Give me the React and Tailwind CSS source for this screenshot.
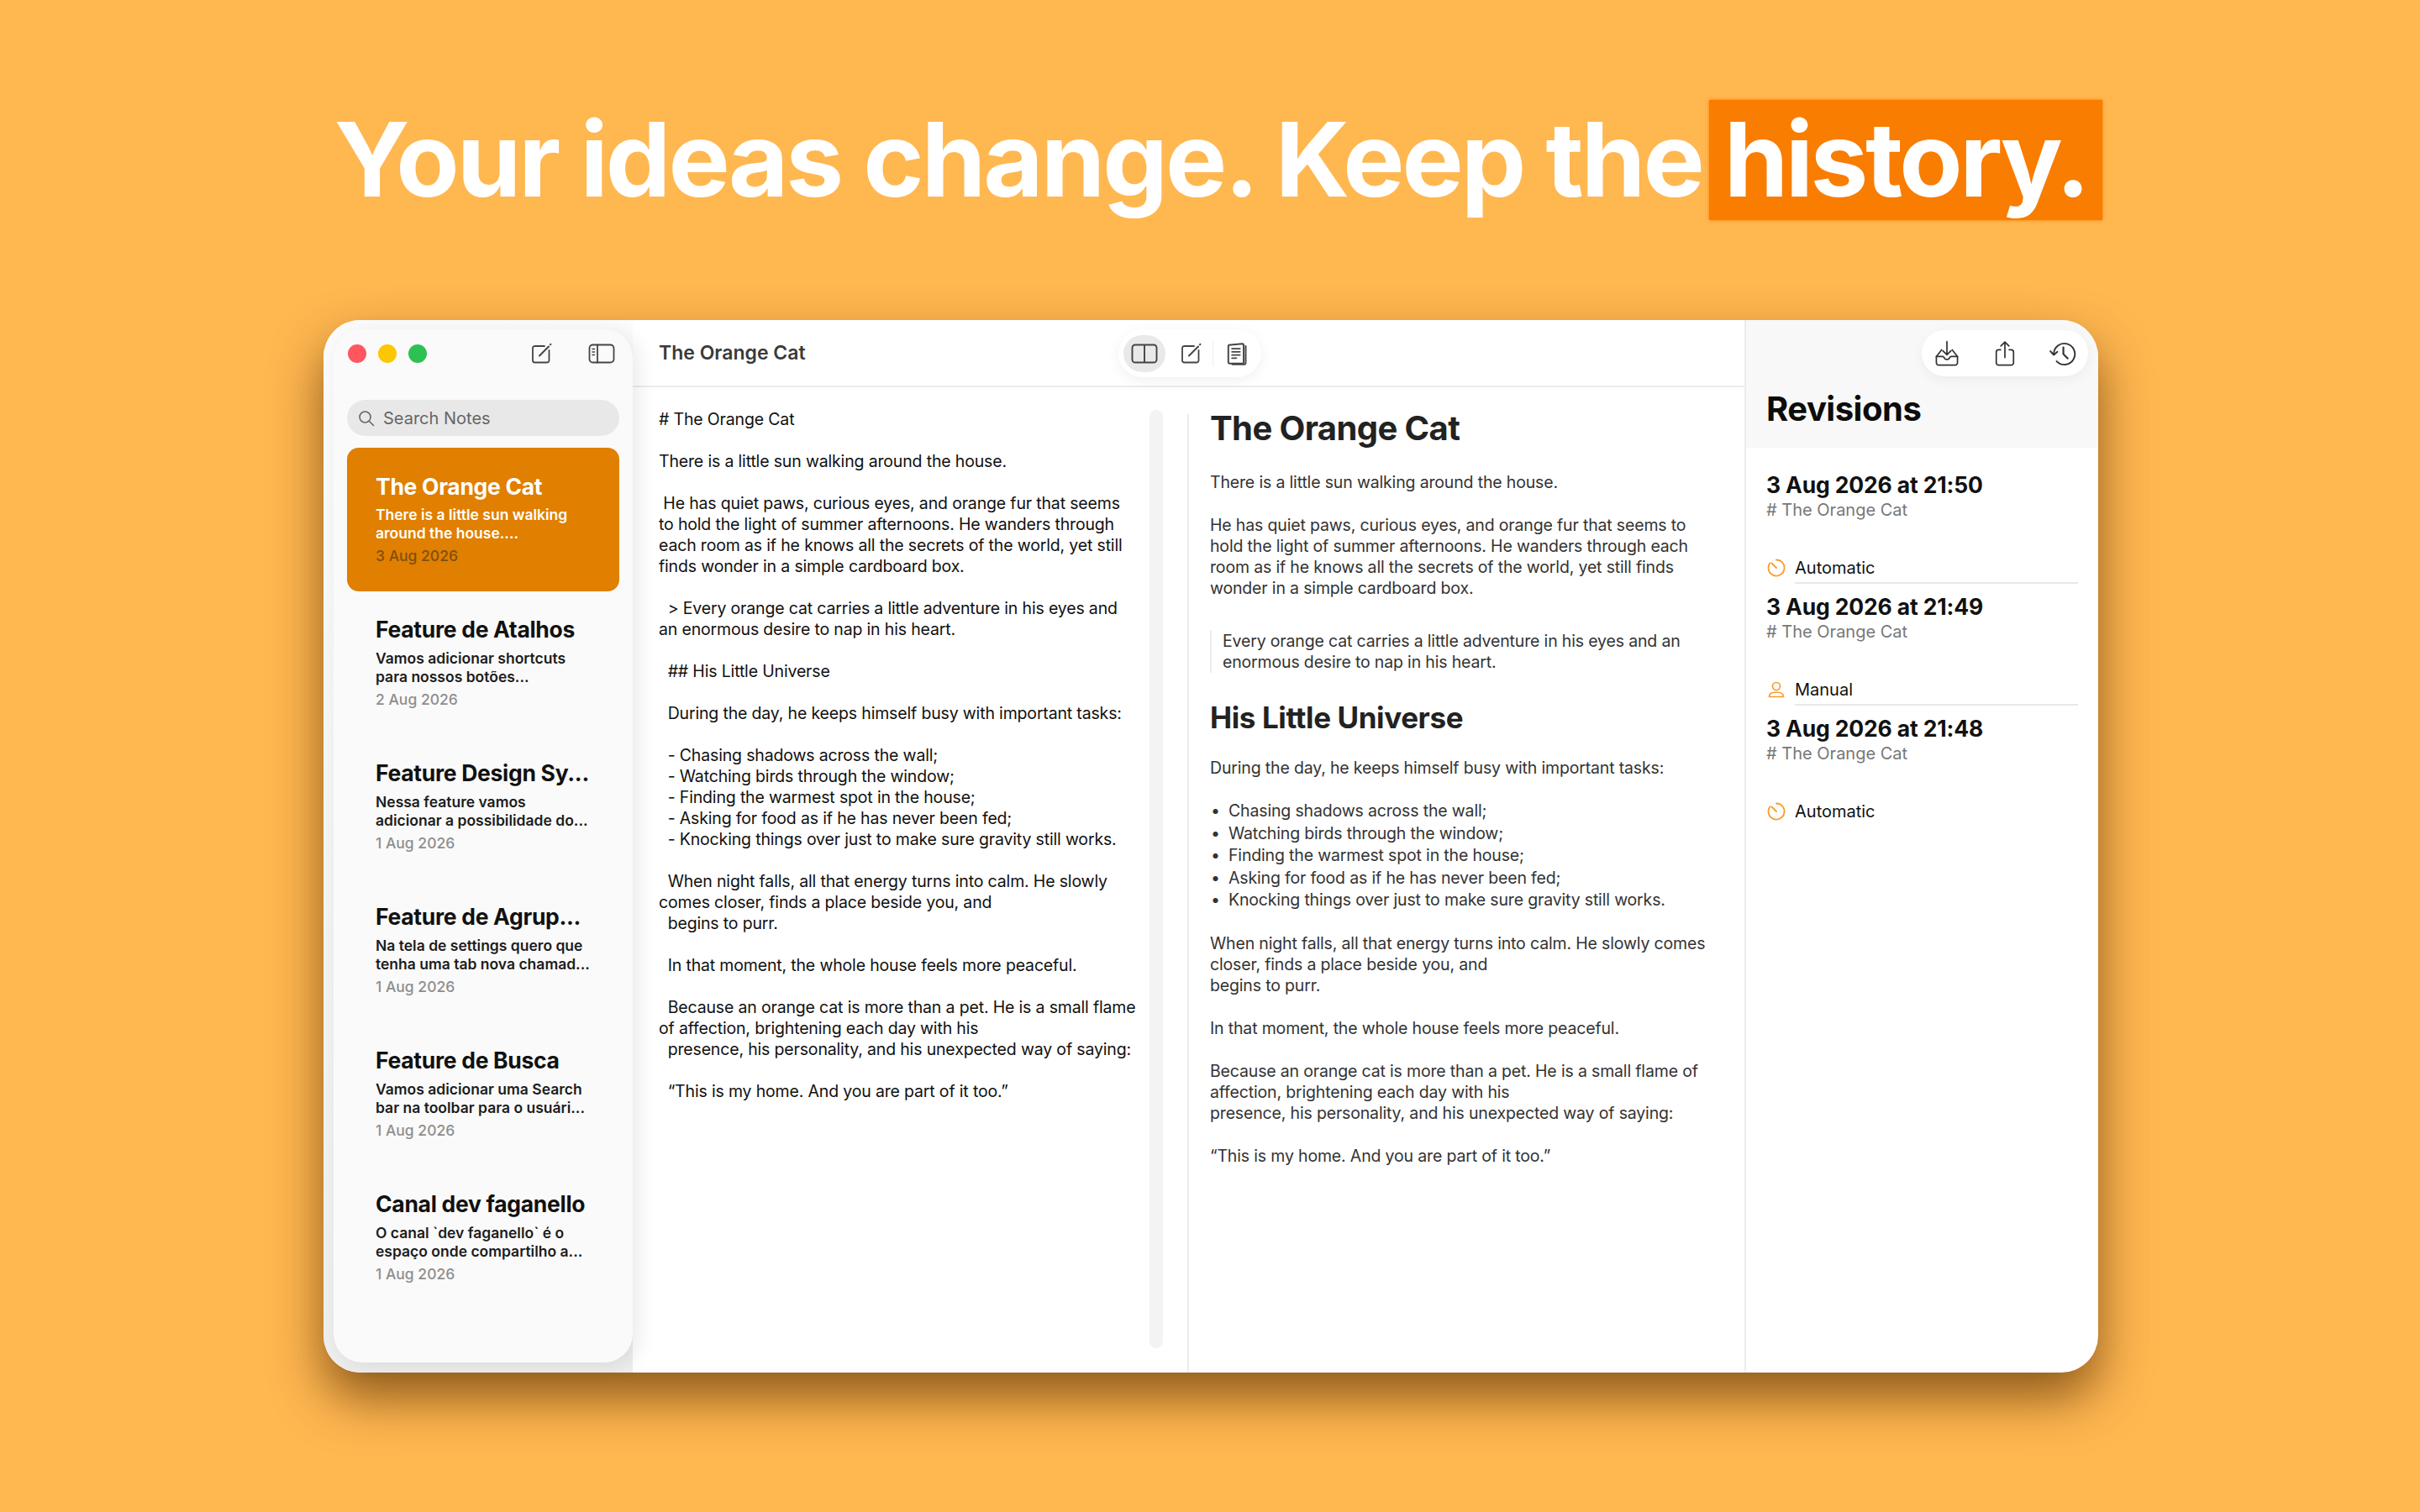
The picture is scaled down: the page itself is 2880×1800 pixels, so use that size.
const EDITOR_TEXT = `# The Orange Cat

There is a little sun walking around the house.

 He has quiet paws, curious eyes, and orange fur that seems
to hold the light of summer afternoons. He wanders through
each room as if he knows all the secrets of the world, yet still
finds wonder in a simple cardboard box.

  > Every orange cat carries a little adventure in his eyes and
an enormous desire to nap in his heart.

  ## His Little Universe

  During the day, he keeps himself busy with important tasks:

  - Chasing shadows across the wall;
  - Watching birds through the window;
  - Finding the warmest spot in the house;
  - Asking for food as if he has never been fed;
  - Knocking things over just to make sure gravity still works.

  When night falls, all that energy turns into calm. He slowly
comes closer, finds a place beside you, and
  begins to purr.

  In that moment, the whole house feels more peaceful.

  Because an orange cat is more than a pet. He is a small flame
of affection, brightening each day with his
  presence, his personality, and his unexpected way of saying:

  “This is my home. And you are part of it too.”`;

const NOTES = [
  { title: "Feature de Atalhos", lines: ["Vamos adicionar shortcuts", "para nossos botões..."], date: "2 Aug 2026" },
  { title: "Feature Design Sy...", lines: ["Nessa feature vamos", "adicionar a possibilidade do..."], date: "1 Aug 2026" },
  { title: "Feature de Agrup...", lines: ["Na tela de settings quero que", "tenha uma tab nova chamad..."], date: "1 Aug 2026" },
  { title: "Feature de Busca", lines: ["Vamos adicionar uma Search", "bar na toolbar para o usuári..."], date: "1 Aug 2026" },
  { title: "Canal dev faganello", lines: ["O canal `dev faganello` é o", "espaço onde compartilho a..."], date: "1 Aug 2026" },
];

const REVISIONS = [
  { when: "3 Aug 2026 at 21:50", kind: "Automatic" },
  { when: "3 Aug 2026 at 21:49", kind: "Manual" },
  { when: "3 Aug 2026 at 21:48", kind: "Automatic" },
];

const LIST_ITEMS = [
  "Chasing shadows across the wall;",
  "Watching birds through the window;",
  "Finding the warmest spot in the house;",
  "Asking for food as if he has never been fed;",
  "Knocking things over just to make sure gravity still works.",
];

function Icon({ size = 28, className = "", children }) {
  return (
    <svg width={size} height={size} viewBox="0 0 28 28" fill="none" stroke="currentColor" strokeWidth="1.8" strokeLinecap="round" strokeLinejoin="round" className={className}>
      {children}
    </svg>
  );
}

function ComposeIcon() {
  return (
    <Icon>
      <path d="M18 5H6.500A2.500 2.500 0 0 0 4 7.500V22a2.500 2.500 0 0 0 2.500 2.500H21a2.500 2.500 0 0 0 2.500-2.500V10" />
      <path d="M12 16.500 23 5.500" strokeWidth="2" />
      <path d="M25 3.200l.4-.4" strokeWidth="2" />
    </Icon>
  );
}

function SidebarIcon() {
  return (
    <svg width="32" height="28" viewBox="0 0 32 28" fill="none" stroke="#444" strokeWidth="1.800" strokeLinecap="round" strokeLinejoin="round">
      <rect x="1.500" y="3.500" width="29" height="21" rx="4" />
      <path d="M11 3.500v21" />
      <path d="M5 8.500h2.500M5 12h2.500M5 15.500h2.500" strokeWidth="1.500" />
    </svg>
  );
}

function SplitIcon() {
  return (
    <svg width="32" height="28" viewBox="0 0 32 28" fill="none" stroke="#444" strokeWidth="1.900" strokeLinejoin="round">
      <rect x="1.500" y="3.500" width="29" height="21" rx="3.500" />
      <path d="M16 3.500v21" />
    </svg>
  );
}

function PagesIcon() {
  return (
    <Icon size={30} className="text-[#444]">
      <path d="M5 4.500 20 3a1.500 1.500 0 0 1 1.500 1.500v19a1.500 1.500 0 0 1-1.500 1.500H6a1.500 1.500 0 0 1-1.500-1.500V5z" />
      <path d="M23.800 5.500v18.500a2 2 0 0 1-2 2H9" />
      <path d="M8.500 8.500h9M8.500 12h9M8.500 15.500h9M8.500 19h5" strokeWidth="1.600" />
    </Icon>
  );
}

function TrayIcon() {
  return (
    <Icon size={32} className="text-[#333]">
      <path d="M8.500 10 3 17v6.500A2.500 2.500 0 0 0 5.500 26h17a2.500 2.500 0 0 0 2.500-2.500V17l-5.500-7" strokeWidth="1.500" />
      <path d="M3 17h6.500a2 2 0 0 1 1.500 1l.8 1.200a1.500 1.500 0 0 0 1.300.8h1.800a1.500 1.500 0 0 0 1.300-.8l.8-1.200a2 2 0 0 1 1.500-1H25" strokeWidth="1.500" />
      <path d="M14 1.500V15M9.800 11l4.200 4.200 4.200-4.200" strokeWidth="1.500" />
    </Icon>
  );
}

function ShareIcon() {
  return (
    <Icon size={32} className="text-[#333]">
      <path d="M9.500 10H7.500A2.500 2.500 0 0 0 5 12.500V23.500A2.500 2.500 0 0 0 7.500 26h13a2.500 2.500 0 0 0 2.500-2.500V12.500A2.500 2.500 0 0 0 20.500 10H18.500" strokeWidth="1.500" />
      <path d="M14 18V1.800M9.800 6l4.200-4.200L18.200 6" strokeWidth="1.500" />
    </Icon>
  );
}

function HistoryIcon() {
  return (
    <Icon size={32} className="text-[#333]">
      <path d="M4.500 14.500A11 11 0 1 1 7.500 22" strokeWidth="1.700" />
      <path d="M1 11.500l3.500 3.800 3.800-3.200" strokeWidth="1.700" />
      <path d="M14.500 7.500v7l4.500 4.500" strokeWidth="1.900" />
    </Icon>
  );
}

function TimerIcon() {
  return (
    <svg width="24" height="24" viewBox="0 0 24 24" fill="none" stroke="#fb9a2c" strokeWidth="1.800" strokeLinecap="round">
      <path d="M12 2.500a9.500 9.500 0 1 1-7.500 3.700" />
      <path d="M6.500 6.500 12 12" />
    </svg>
  );
}

function PersonIcon() {
  return (
    <svg width="24" height="24" viewBox="0 0 24 24" fill="none" stroke="#fb9a2c" strokeWidth="1.700" strokeLinejoin="round">
      <circle cx="12" cy="8" r="4.500" />
      <path d="M3.500 20.500c0-3.500 3.500-5.500 8.500-5.500s8.500 2 8.500 5.500z" />
    </svg>
  );
}

function SearchIcon() {
  return (
    <svg width="20" height="20" viewBox="0 0 20 20" fill="none" stroke="#666" strokeWidth="1.600" strokeLinecap="round">
      <circle cx="8.500" cy="8.500" r="6.500" />
      <path d="M13.500 13.500 18.500 18.500" />
    </svg>
  );
}

function NoteRow({ note }) {
  return (
    <div className="h-[171px] pl-[34px] pt-[27px] shrink-0">
      <div className="text-[26.500px] leading-[36px] font-bold tracking-[-0.3px] text-[#111] whitespace-nowrap">{note.title}</div>
      <div className="mt-[6px] text-[17.500px] leading-[22px] font-semibold text-[#1c1c1c] whitespace-nowrap">
        {note.lines.map((line) => <div key={line}>{line}</div>)}
      </div>
      <div className="mt-[5px] text-[17.500px] leading-[22px] font-medium text-[#8e8e8e]">{note.date}</div>
    </div>
  );
}

function Sidebar() {
  return (
    <aside className="w-[368px] shrink-0 bg-linear-to-b from-[#fcfcfc] to-[#eeeeee] pl-[12px] pt-[11px] pb-[12px] rounded-l-[44px] relative z-10">
      <div className="w-[356px] h-full rounded-[34px] bg-[#fafafa] shadow-[6px_4px_24px_rgba(0,0,0,0.09)] px-[16px] flex flex-col">
        <div className="h-[56px] flex items-center pt-[2px] shrink-0">
          <span className="w-[22px] h-[22px] rounded-full bg-[#ff5660] ml-[1px]" />
          <span className="w-[22px] h-[22px] rounded-full bg-[#fcc700] ml-[14px]" />
          <span className="w-[22px] h-[22px] rounded-full bg-[#2dc153] ml-[14px]" />
          <span className="ml-auto mr-[42px] text-[#444] flex"><ComposeIcon /></span>
          <span className="mr-[5px] flex"><SidebarIcon /></span>
        </div>
        <div className="mt-[28px] h-[43px] rounded-full bg-[#e8e8e8] flex items-center pl-[13px] gap-[10px] shrink-0">
          <SearchIcon />
          <span className="text-[20px] text-[#666]">Search Notes</span>
        </div>
        <div className="mt-[14px] h-[171px] rounded-[14px] bg-[#e07f00] pl-[34px] pt-[28px] shrink-0">
          <div className="text-[26.500px] leading-[36px] font-bold tracking-[-0.3px] text-white">The Orange Cat</div>
          <div className="mt-[5px] text-[17.500px] leading-[22px] font-semibold text-white">
            <div>There is a little sun walking</div>
            <div>around the house....</div>
          </div>
          <div className="mt-[5px] text-[17.500px] leading-[22px] font-medium text-[#80500f]">3 Aug 2026</div>
        </div>
        {NOTES.map((note) => <NoteRow key={note.title} note={note} />)}
      </div>
    </aside>
  );
}

function EditorPane() {
  return (
    <div className="w-[660px] shrink-0 pl-[31px] pt-[26px] relative">
      <pre className="font-['Inter',sans-serif] text-[19.500px] tracking-[-0.16px] leading-[25px] text-[#111] whitespace-pre">{EDITOR_TEXT}</pre>
      <div className="absolute left-[615px] top-[27px] bottom-[29px] w-[16px] rounded-full bg-[#f3f3f3]" />
    </div>
  );
}

function PreviewPane() {
  return (
    <div className="flex-1 mt-[32px] border-l-2 border-[#ececec] pl-[25px] text-[19.500px] tracking-[-0.16px] leading-[25px] text-[#333]">
      <h2 className="text-[40px] leading-[48px] font-bold tracking-[-0.6px] text-[#222] -mt-[7px]">The Orange Cat</h2>
      <p className="mt-[28px]">There is a little sun walking around the house.</p>
      <p className="mt-[26px] whitespace-pre">{"He has quiet paws, curious eyes, and orange fur that seems to\nhold the light of summer afternoons. He wanders through each\nroom as if he knows all the secrets of the world, yet still finds\nwonder in a simple cardboard box."}</p>
      <blockquote className="mt-[38px] border-l-2 border-[#ececec] pl-[13px] whitespace-pre">{"Every orange cat carries a little adventure in his eyes and an\nenormous desire to nap in his heart."}</blockquote>
      <h3 className="mt-[31px] text-[35px] leading-[44px] font-bold tracking-[-0.4px] text-[#222]">His Little Universe</h3>
      <p className="mt-[26px]">During the day, he keeps himself busy with important tasks:</p>
      <ul className="mt-[25px] leading-[26.500px]">
        {LIST_ITEMS.map((item) => (
          <li key={item} className="flex">
            <span className="w-[22px] pl-[1px]">•</span>
            <span>{item}</span>
          </li>
        ))}
      </ul>
      <p className="mt-[26px] whitespace-pre">{"When night falls, all that energy turns into calm. He slowly comes\ncloser, finds a place beside you, and\nbegins to purr."}</p>
      <p className="mt-[26px]">In that moment, the whole house feels more peaceful.</p>
      <p className="mt-[26px] whitespace-pre">{"Because an orange cat is more than a pet. He is a small flame of\naffection, brightening each day with his\npresence, his personality, and his unexpected way of saying:"}</p>
      <p className="mt-[26px]">“This is my home. And you are part of it too.”</p>
    </div>
  );
}

function Revision({ item, last }) {
  return (
    <div className="h-[145px] shrink-0">
      <div className="text-[26.500px] leading-[34px] font-bold tracking-[-0.15px] text-[#111] whitespace-nowrap">{item.when}</div>
      <div className="text-[20px] leading-[26px] text-[#777]">{"# The Orange Cat"}</div>
      <div className="mt-[44px] flex items-center gap-[10px]">
        {item.kind === "Automatic" ? <TimerIcon /> : <PersonIcon />}
        <span className="text-[20px] leading-[24px] text-[#111]">{item.kind}</span>
      </div>
      {!last && <div className="mt-[5px] ml-[34px] mr-[24px] h-[2px] bg-[#e8e8e8]" />}
    </div>
  );
}

function RevisionsPanel() {
  return (
    <aside className="w-[421px] shrink-0 border-l-2 border-[#ececec] flex flex-col rounded-r-[44px]">
      <div className="h-[152px] bg-[#f8f8f8] rounded-tr-[44px] pl-[24px] relative shrink-0">
        <div className="absolute right-[12px] top-[12px] h-[55px] w-[198px] rounded-full bg-white shadow-[0_4px_14px_rgba(0,0,0,0.05)] flex items-center justify-between px-[14px]">
          <TrayIcon />
          <ShareIcon />
          <HistoryIcon />
        </div>
        <h2 className="pt-[79px] text-[40px] leading-[54px] font-bold tracking-[-0.5px] text-[#0c0c0c]">Revisions</h2>
      </div>
      <div className="pl-[24px] pt-[27px] flex flex-col">
        {REVISIONS.map((item, i) => <Revision key={item.when} item={item} last={i === REVISIONS.length - 1} />)}
      </div>
    </aside>
  );
}

export default function App() {
  return (
    <div className="w-[2880px] h-[1800px] overflow-hidden bg-[#ffb750] font-['Inter',sans-serif] flex flex-col items-center">
      <h1 className="mt-[119px] h-[143px] flex items-center text-[123px] font-bold tracking-[-3.500px] text-white whitespace-nowrap pl-[20px]">
        <span className="tracking-[-3px]">Your ideas change. Keep the</span>
        <span className="ml-[8px] h-full flex items-center px-[18px] bg-[#f97d00] shadow-[0_0_4px_#f97d00]">history.</span>
      </h1>

      {/* App window */}
      <div className="mt-[119px] ml-[2px] w-[2112px] h-[1253px] rounded-[44px] bg-white flex shadow-[0_30px_60px_rgba(80,40,0,0.65)]">
        <Sidebar />
        <main className="flex-1 min-w-0 flex flex-col">
          <header className="h-[80px] border-b-2 border-[#ececec] flex items-center pl-[31px] relative shrink-0">
            <span className="text-[23px] font-semibold text-[#3a3a3a]">The Orange Cat</span>
            <div className="absolute left-[578px] top-[11px] h-[57px] w-[170px] rounded-full bg-white shadow-[0_4px_16px_rgba(0,0,0,0.06)] flex items-center pl-[6px]">
              <span className="w-[50px] h-[44px] rounded-full bg-[#e9e9e9] flex items-center justify-center"><SplitIcon /></span>
              <span className="ml-[16px] text-[#444] flex"><ComposeIcon /></span>
              <span className="ml-[12px] w-[1px] h-[30px] bg-[#eeeeee]" />
              <span className="ml-[13px] flex"><PagesIcon /></span>
            </div>
          </header>
          <div className="flex-1 flex min-h-0">
            <EditorPane />
            <PreviewPane />
          </div>
        </main>
        <RevisionsPanel />
      </div>
    </div>
  );
}
